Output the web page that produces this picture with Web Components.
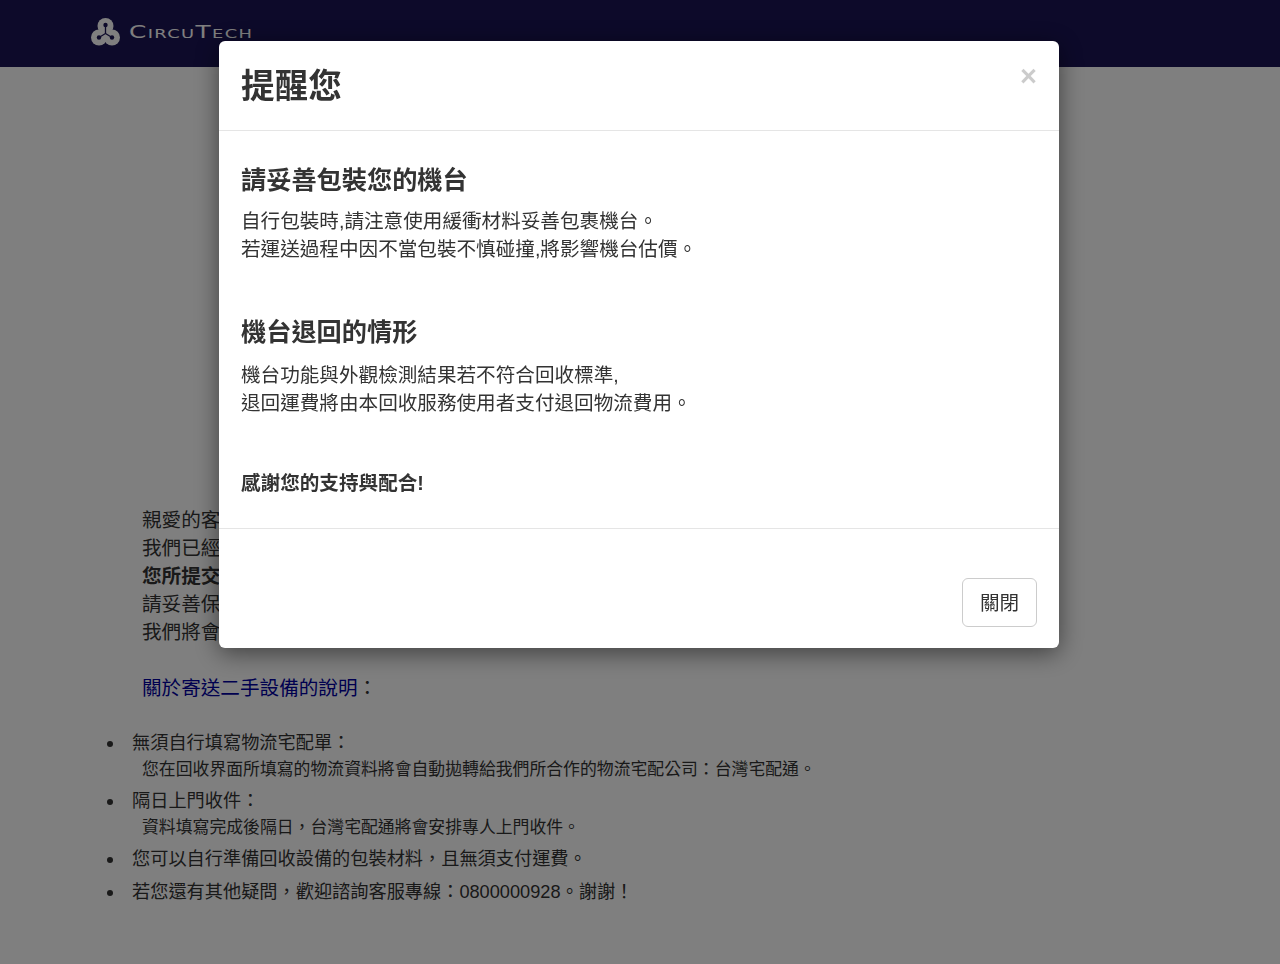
<!DOCTYPE html>
<html lang="zh-Hant">
<head>
<meta charset="utf-8">
<title>CircuTech</title>
<style>
    html, body { margin: 0; padding: 0; background: #fff; }
    body {
        font-family: "Liberation Sans", "Noto Sans CJK TC", sans-serif;
        color: #333333;
    }
</style>
</head>
<body>
<site-header></site-header>
<notice-page>
    <notice-lines>
        <span>親愛的客</span>
        <span>我們已經</span>
        <b>您所提交</b>
        <span>請妥善保</span>
        <span>我們將會</span>
    </notice-lines>
    <a slot="title" href="#">關於寄送二手設備的說明</a>
    <notice-item slot="items" label="無須自行填寫物流宅配單：" note="您在回收界面所填寫的物流資料將會自動拋轉給我們所合作的物流宅配公司：台灣宅配通。"></notice-item>
    <notice-item slot="items" label="隔日上門收件：" note="資料填寫完成後隔日，台灣宅配通將會安排專人上門收件。"></notice-item>
    <notice-item slot="items" label="您可以自行準備回收設備的包裝材料，且無須支付運費。"></notice-item>
    <notice-item slot="items" label="若您還有其他疑問，歡迎諮詢客服專線：0800000928。謝謝！"></notice-item>
</notice-page>
<modal-dialog heading="提醒您" close-label="關閉">
    <modal-section heading="請妥善包裝您的機台">
        <div>自行包裝時,請注意使用緩衝材料妥善包裹機台。</div>
        <div>若運送過程中因不當包裝不慎碰撞,將影響機台估價。</div>
    </modal-section>
    <modal-section heading="機台退回的情形">
        <div>機台功能與外觀檢測結果若不符合回收標準,</div>
        <div>退回運費將由本回收服務使用者支付退回物流費用。</div>
    </modal-section>
    <b>感謝您的支持與配合!</b>
</modal-dialog>

<script>
class SiteHeader extends HTMLElement {
    constructor() {
        super();
        this.attachShadow({ mode: "open" }).innerHTML = `
            <style>
                :host { display: block; height: 67px; background: #1a1454; }
                .logo {
                    display: flex;
                    align-items: center;
                    gap: 9px;
                    padding: 18px 0 0 91px;
                    color: #fff;
                }
                svg { display: block; flex: none; }
                .name {
                    display: inline-block;
                    font: 400 18px/28px "DejaVu Sans", sans-serif;
                    font-variant: small-caps;
                    letter-spacing: 1px;
                    transform: scaleX(1.375);
                    transform-origin: left center;
                }
            </style>
            <div class="logo">
                <svg width="29" height="28" viewBox="0 0 29 28">
                    <g fill="#fff">
                        <circle cx="14.5" cy="8" r="8"/>
                        <circle cx="8" cy="19.5" r="8"/>
                        <circle cx="21" cy="19.5" r="8"/>
                    </g>
                    <g stroke="#1a1454" stroke-width="1.3" fill="none">
                        <path d="M14.5 7V15.5L8 19.5M14.5 15.5L21 19.5"/>
                    </g>
                    <g fill="#1a1454">
                        <circle cx="14.5" cy="7" r="2.2"/>
                        <circle cx="8" cy="19.5" r="2.2"/>
                        <circle cx="21" cy="19.5" r="2.2"/>
                    </g>
                </svg>
                <span class="name">CircuTech</span>
            </div>
        `;
    }
}

class NoticePage extends HTMLElement {
    constructor() {
        super();
        this.attachShadow({ mode: "open" }).innerHTML = `
            <style>
                :host {
                    display: block;
                    padding: 439px 0 58px 107px;
                    font-size: 19.6px;
                    line-height: 28px;
                }
                .body { padding-left: 35px; }
                .title { margin: 28px 0 27px; }
                ::slotted(a) { color: #0000a0; text-decoration: none; }
            </style>
            <div class="body">
                <slot></slot>
                <div class="title"><slot name="title"></slot>：</div>
            </div>
            <div><slot name="items"></slot></div>
        `;
    }
}

class NoticeLines extends HTMLElement {
    constructor() {
        super();
        this.attachShadow({ mode: "open" }).innerHTML = `
            <style>
                :host { display: block; }
                ::slotted(*) { display: block; white-space: nowrap; }
            </style>
            <slot></slot>
        `;
    }
}

class NoticeItem extends HTMLElement {
    constructor() {
        super();
        const label = this.getAttribute("label") || "";
        const note = this.getAttribute("note");
        this.attachShadow({ mode: "open" }).innerHTML = `
            <style>
                :host { display: flex; gap: 19px; margin-bottom: 5px; font-size: 18.2px; }
                .dot {
                    flex: none;
                    width: 6px;
                    height: 6px;
                    margin-top: 12px;
                    border-radius: 50%;
                    background: currentColor;
                }
                .note {
                    padding-left: 10px;
                    font-size: 16.85px;
                    line-height: 24px;
                    margin-top: 1px;
                }
            </style>
            <span class="dot"></span>
            <div>
                <div>${label}</div>
                ${note ? `<div class="note">${note}</div>` : ""}
            </div>
        `;
    }
}

class ModalDialog extends HTMLElement {
    constructor() {
        super();
        const heading = this.getAttribute("heading") || "";
        const closeLabel = this.getAttribute("close-label") || "Close";
        this.attachShadow({ mode: "open" }).innerHTML = `
            <style>
                :host {
                    position: fixed;
                    inset: 0;
                    display: block;
                    background: rgba(0, 0, 0, 0.5);
                    overflow: hidden;
                }
                .dialog {
                    box-sizing: border-box;
                    width: 840px;
                    margin: 41px 0 0 219px;
                    background: #fff;
                    border-radius: 6px;
                    box-shadow: 0 5px 25px rgba(0, 0, 0, 0.5);
                    color: #333333;
                }
                header {
                    display: flex;
                    justify-content: space-between;
                    align-items: flex-start;
                    height: 89px;
                    padding: 0 22px;
                    border-bottom: 1px solid #e5e5e5;
                }
                h4 {
                    margin: 22px 0 0;
                    font-size: 33.6px;
                    line-height: 48px;
                    font-weight: 700;
                }
                .x {
                    margin-top: 19px;
                    border: 0;
                    padding: 0;
                    background: none;
                    color: #000;
                    opacity: 0.2;
                    font: 700 29px/32px "Liberation Sans", sans-serif;
                }
                main {
                    height: 397px;
                    box-sizing: border-box;
                    padding: 31px 22px 0;
                    font-size: 19.6px;
                    line-height: 28px;
                }
                ::slotted(b) { display: block; margin-top: 52px; }
                footer {
                    display: flex;
                    justify-content: flex-end;
                    height: 120px;
                    box-sizing: border-box;
                    padding: 49px 22px 0;
                    border-top: 1px solid #e5e5e5;
                }
                .btn {
                    box-sizing: border-box;
                    width: 75px;
                    height: 49px;
                    background: #fff;
                    border: 1px solid #cccccc;
                    border-radius: 6px;
                    color: #333333;
                    font: 400 19.6px/28px "Liberation Sans", "Noto Sans CJK TC", sans-serif;
                    padding: 0;
                }
            </style>
            <div class="dialog">
                <header>
                    <h4>${heading}</h4>
                    <button class="x" aria-label="Close">×</button>
                </header>
                <main><slot></slot></main>
                <footer><button class="btn">${closeLabel}</button></footer>
            </div>
        `;
    }
}

class ModalSection extends HTMLElement {
    constructor() {
        super();
        const heading = this.getAttribute("heading") || "";
        this.attachShadow({ mode: "open" }).innerHTML = `
            <style>
                :host { display: block; margin-bottom: 51px; }
                :host(:nth-of-type(2)) { margin-bottom: 38px; }
                :host(:nth-of-type(2)) h3 { margin-bottom: 11px; }
                h3 {
                    margin: 0 0 9px;
                    font-size: 25.2px;
                    line-height: 36px;
                    font-weight: 700;
                }
            </style>
            <h3>${heading}</h3>
            <slot></slot>
        `;
    }
}

customElements.define("site-header", SiteHeader);
customElements.define("notice-page", NoticePage);
customElements.define("notice-lines", NoticeLines);
customElements.define("notice-item", NoticeItem);
customElements.define("modal-dialog", ModalDialog);
customElements.define("modal-section", ModalSection);
</script>
</body>
</html>
